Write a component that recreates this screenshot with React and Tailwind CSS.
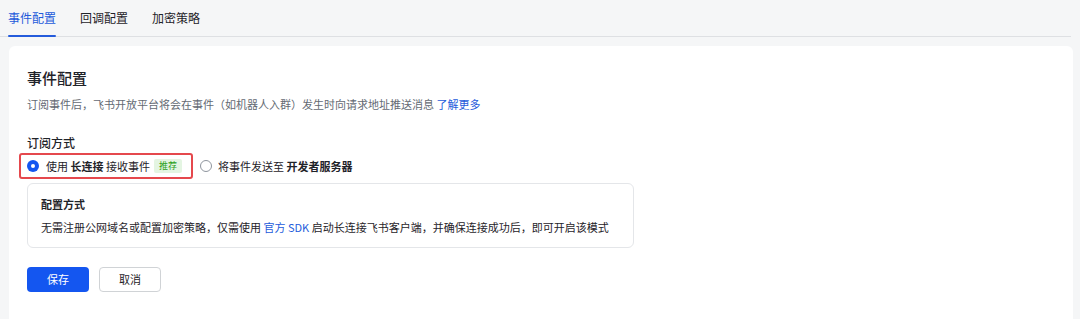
export default function App() {
  const tabs = ["事件配置", "回调配置", "加密策略"];

  return (
    <div className="h-screen overflow-hidden bg-[#f5f6f7] font-['Noto_Sans_CJK_SC','Noto_Sans',sans-serif] text-[#1f2329]">
      {/* Tabs */}
      <div className="mr-[9px] flex h-[37px] gap-6 border-b border-[#dee0e3] pl-2">
        {tabs.map((t, i) => (
          <div
            key={t}
            className={
              "relative flex items-center text-[12px] " +
              (i === 0 ? "text-[#245bdb]" : "text-[#1f2329]")
            }
          >
            {t}
            {i === 0 && (
              <div className="absolute -bottom-px left-0 right-0 h-[2px] rounded-full bg-[#245bdb]" />
            )}
          </div>
        ))}
      </div>

      {/* Card */}
      <div className="mr-[7px] ml-[9px] mt-[9px] min-h-[300px] rounded-md bg-white px-[18px] pt-[21px]">
        <h1 className="text-[15px] leading-[22px] font-medium">事件配置</h1>
        <p className="mt-[7px] text-[11px] leading-[16px] text-[#646a73]">
          订阅事件后，飞书开放平台将会在事件（如机器人入群）发生时向请求地址推送消息{" "}
          <span className="text-[#245bdb]">了解更多</span>
        </p>

        <div className="mt-[22px] text-[12px] leading-[18px] font-medium">订阅方式</div>

        <div className="mt-px flex items-center text-[11px]">
          <div className="-ml-[8px] flex h-[26px] items-center rounded-[3px] border-2 border-[#e5484d] pl-[6px] pr-[9px]">
            <span className="flex h-[12px] w-[12px] items-center justify-center rounded-full bg-[#1456f0]">
              <span className="h-[4px] w-[4px] rounded-full bg-white" />
            </span>
            <span className="ml-[7px]">
              使用 <b className="font-semibold">长连接</b> 接收事件
            </span>
            <span className="ml-1 rounded-[2px] bg-[#e4f5e2] px-[5px] text-[9px] leading-[14px] text-[#2ea121]">
              推荐
            </span>
          </div>
          <span className="ml-[7px] h-[12px] w-[12px] rounded-full border border-[#8f959e] bg-white" />
          <span className="ml-[6px]">
            将事件发送至 <b className="font-semibold">开发者服务器</b>
          </span>
        </div>

        <div className="mt-[4px] w-[607px] rounded-md border border-[#e4e6e9] px-[13px] pt-[12px] pb-[12px] text-[11px] leading-[16px]">
          <div className="font-semibold">配置方式</div>
          <div className="mt-[7px]">
            无需注册公网域名或配置加密策略，仅需使用{" "}
            <span className="text-[#245bdb]">官方 SDK</span>{" "}
            启动长连接飞书客户端，并确保连接成功后，即可开启该模式
          </div>
        </div>

        <div className="mt-[19px] flex gap-[10px] text-[11px]">
          <button className="h-[25px] w-[62px] rounded-[4px] bg-[#1456f0] text-white">保存</button>
          <button className="h-[25px] w-[62px] rounded-[4px] border border-[#d0d3d6] bg-white text-[#1f2329]">
            取消
          </button>
        </div>
      </div>
    </div>
  );
}
